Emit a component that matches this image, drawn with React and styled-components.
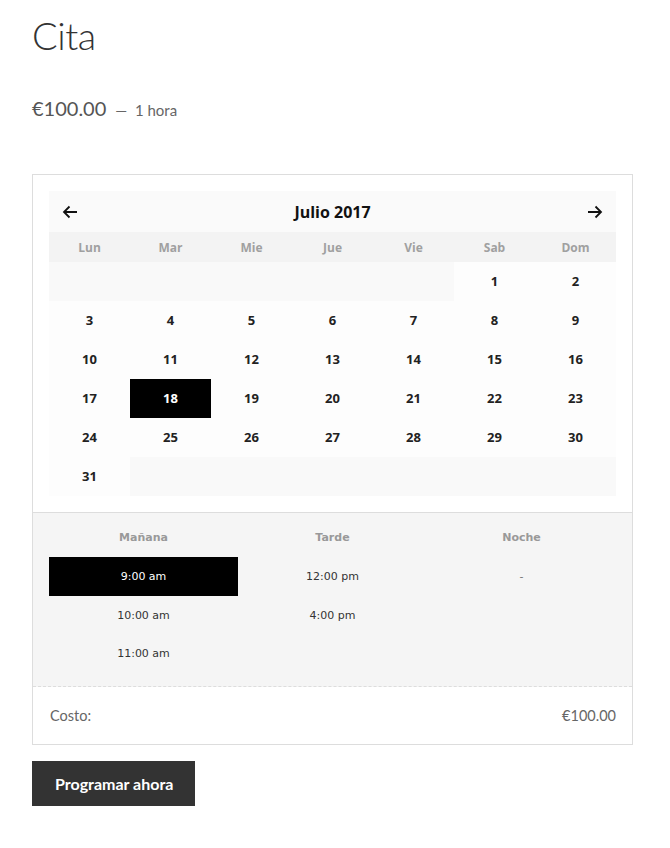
import React from 'react';
import styled, { createGlobalStyle } from 'styled-components';

const GlobalStyle = createGlobalStyle`
  body {
    margin: 0;
    background: #fff;
    font-family: Lato, "Open Sans", sans-serif;
    color: #333;
  }
`;

const Page = styled.div`
  padding: 12px 37px 40px 32px;
`;

const Title = styled.h1`
  margin: 0;
  font-family: Lato, sans-serif;
  font-weight: 300;
  font-size: 38px;
  line-height: 46px;
  color: #333;
  letter-spacing: -0.5px;
`;

const PriceLine = styled.p`
  margin: 38px 0 0;
  display: flex;
  align-items: baseline;
  gap: 9px;
  color: #555;
  line-height: 24px;
`;

const Amount = styled.span`
  font-size: 20px;
  font-weight: 400;
  color: #555;
`;

const Duration = styled.span`
  font-size: 15px;
  color: #666;
`;

const Booking = styled.div`
  margin-top: 52px;
  border: 1px solid #ddd;
`;

const CalendarWrap = styled.div`
  padding: 16px;
`;

const Calendar = styled.div`
  background: #fafafa;
`;

const MonthBar = styled.div`
  display: flex;
  align-items: center;
  justify-content: space-between;
  height: 41px;
  padding: 0 12px;
`;

const Month = styled.span`
  font-family: "Open Sans", sans-serif;
  font-weight: 700;
  font-size: 16px;
  color: #111;
`;

const Arrow = styled.button`
  border: 0;
  background: none;
  padding: 0;
  width: 18px;
  height: 18px;
  display: flex;
  align-items: center;
  justify-content: center;
  cursor: pointer;
`;

const Grid = styled.div`
  display: grid;
  grid-template-columns: repeat(7, 1fr);
`;

const WeekHead = styled(Grid)`
  background: #f3f3f3;
  height: 30px;
  align-items: center;
`;

const WeekDay = styled.span`
  text-align: center;
  font-family: "Open Sans", sans-serif;
  font-weight: 700;
  font-size: 12px;
  color: #a0a0a0;
`;

const Day = styled.div`
  height: 39px;
  display: flex;
  align-items: center;
  justify-content: center;
  padding-bottom: 1px;
  box-sizing: border-box;
  font-family: "Open Sans", sans-serif;
  font-weight: 700;
  font-size: 13px;
  color: ${p => (p.$selected ? '#fff' : '#222')};
  background: ${p => (p.$selected ? '#000' : p.$empty ? '#f9f9f9' : '#fdfdfd')};
`;

const Slots = styled.div`
  border-top: 1px solid #ddd;
  border-bottom: 1px dashed #ddd;
  background: #f5f5f5;
  padding: 17px 16px 14px;
  display: grid;
  grid-template-columns: repeat(3, 1fr);
`;

const SlotColumn = styled.div`
  display: flex;
  flex-direction: column;
`;

const SlotHead = styled.div`
  text-align: center;
  font-family: "DejaVu Sans", Verdana, sans-serif;
  font-weight: 700;
  font-size: 11px;
  color: #999;
  height: 16px;
  line-height: 16px;
  margin-bottom: 11px;
`;

const Slot = styled.div`
  height: ${p => (p.$first ? '39px' : '38px')};
  display: flex;
  align-items: center;
  justify-content: center;
  font-family: "DejaVu Sans", Verdana, sans-serif;
  font-size: 11px;
  color: ${p => (p.$selected ? '#fff' : p.$muted ? '#777' : '#333')};
  background: ${p => (p.$selected ? '#000' : 'transparent')};
`;

const CostRow = styled.div`
  display: flex;
  justify-content: space-between;
  align-items: center;
  height: 57px;
  padding: 0 16px 0 17px;
  font-family: Lato, "Open Sans", sans-serif;
  font-size: 14.5px;
  color: #666;
`;

const Submit = styled.button`
  margin-top: 16px;
  height: 45px;
  padding: 0 22px 0 23px;
  border: 0;
  background: #333;
  color: #fff;
  font-family: Lato, "Open Sans", sans-serif;
  font-weight: 700;
  font-size: 16px;
  cursor: pointer;
`;

const ArrowIcon = ({ dir }) => (
  <svg width="16" height="14" viewBox="0 0 16 14" fill="none" stroke="#111" strokeWidth="1.8">
    {dir === 'left' ? (
      <path d="M15 7H2M7.5 1.5L2 7l5.5 5.5" />
    ) : (
      <path d="M1 7h13M8.5 1.5L14 7l-5.5 5.5" />
    )}
  </svg>
);

const weekdays = ['Lun', 'Mar', 'Mie', 'Jue', 'Vie', 'Sab', 'Dom'];

const days = [];
for (let i = 0; i < 5; i++) days.push(null);
for (let d = 1; d <= 31; d++) days.push(d);
while (days.length < 42) days.push(null);

const slots = [
  { head: 'Mañana', items: ['9:00 am', '10:00 am', '11:00 am'] },
  { head: 'Tarde', items: ['12:00 pm', '4:00 pm'] },
  { head: 'Noche', items: ['-'] }
];

export default function App() {
  return (
    <Page>
      <GlobalStyle />
      <Title>Cita</Title>
      <PriceLine>
        <Amount>€100.00</Amount>
        <Duration>— &nbsp;1 hora</Duration>
      </PriceLine>
      <Booking>
        <CalendarWrap>
          <Calendar>
            <MonthBar>
              <Arrow aria-label="Anterior">
                <ArrowIcon dir="left" />
              </Arrow>
              <Month>Julio 2017</Month>
              <Arrow aria-label="Siguiente">
                <ArrowIcon dir="right" />
              </Arrow>
            </MonthBar>
            <WeekHead>
              {weekdays.map(w => (
                <WeekDay key={w}>{w}</WeekDay>
              ))}
            </WeekHead>
            <Grid>
              {days.map((d, i) => (
                <Day key={i} $empty={d === null} $selected={d === 18}>
                  {d}
                </Day>
              ))}
            </Grid>
          </Calendar>
        </CalendarWrap>
        <Slots>
          {slots.map(col => (
            <SlotColumn key={col.head}>
              <SlotHead>{col.head}</SlotHead>
              {col.items.map((t, i) => (
                <Slot key={t} $first={i === 0} $selected={t === '9:00 am'} $muted={t === '-'}>
                  {t}
                </Slot>
              ))}
            </SlotColumn>
          ))}
        </Slots>
        <CostRow>
          <span>Costo:</span>
          <span>€100.00</span>
        </CostRow>
      </Booking>
      <Submit>Programar ahora</Submit>
    </Page>
  );
}
